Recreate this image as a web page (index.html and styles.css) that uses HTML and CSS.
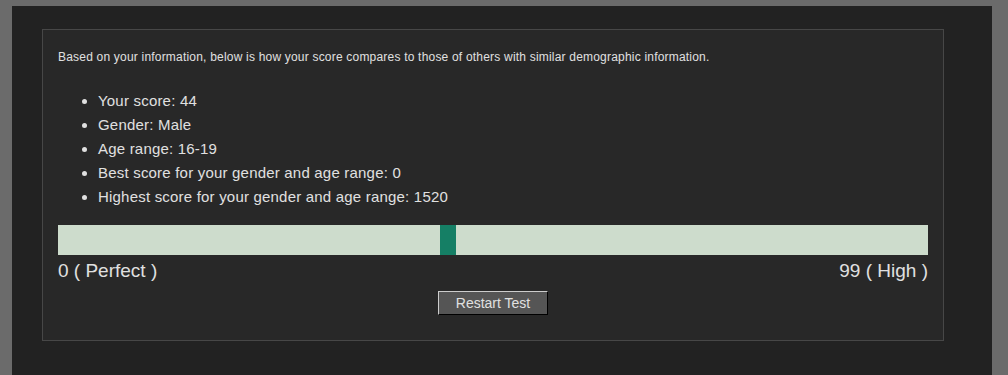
FILE: index.html
```html
<!DOCTYPE html>
<html lang="en">
<head>
    <meta charset="UTF-8">
    <meta name="viewport" content="width=device-width, initial-scale=1.0">
    <title>Test Results</title>
    <link rel="stylesheet" href="styles.css">
</head>
<body>

    <div class="page">
        <div class="results">
            <p class="intro">Based on your information, below is how your score compares to those of others with similar demographic information.</p>

            <ul class="stats">
                <li>Your score: 44</li>
                <li>Gender: Male</li>
                <li>Age range: 16-19</li>
                <li>Best score for your gender and age range: 0</li>
                <li>Highest score for your gender and age range: 1520</li>
            </ul>

            <div class="scale">
                <div class="marker" style="left: 43.9%;"></div>
            </div>
            <div class="scale-labels">
                <span>0 ( Perfect )</span>
                <span>99 ( High )</span>
            </div>

            <div class="actions">
                <button class="restart">Restart Test</button>
            </div>
        </div>
    </div>

</body>
</html>
```

FILE: styles.css
```css
body {
    font-family: "Liberation Sans", Arial, sans-serif;
    background-color: #6b6b6b;
    margin: 0;
    padding: 6px 16px 0 12px;
    color: #e0e0e0;
}
.page {
    box-sizing: border-box;
    background-color: #222222;
    padding: 23px 48px 20px 30px;
    min-height: calc(100vh - 6px);
}
.results {
    background-color: #282828;
    border: 1px solid #474747;
    padding: 20px 15px 25px 15px;
}
.intro {
    font-size: 12px;
    letter-spacing: 0.2px;
    margin: 0 0 25px 0;
    line-height: 14px;
}
.stats {
    margin: 0 0 16px 0;
    padding-left: 40px;
    font-size: 15px;
    letter-spacing: 0.2px;
    line-height: 24px;
}
.scale {
    position: relative;
    height: 30px;
    background-color: #cddccc;
}
.marker {
    position: absolute;
    top: 0;
    width: 16px;
    height: 30px;
    background-color: #157f65;
}
.scale-labels {
    display: flex;
    justify-content: space-between;
    font-size: 19px;
    line-height: 22px;
    margin-top: 5px;
}
.actions {
    text-align: center;
    margin-top: 9px;
}
.restart {
    width: 110px;
    height: 24px;
    font-family: "Liberation Sans", Arial, sans-serif;
    font-size: 14px;
    color: #e0e0e0;
    background-color: #555555;
    border: 1px solid;
    border-color: #cccccc #000000 #000000 #cccccc;
    cursor: pointer;
}
```
